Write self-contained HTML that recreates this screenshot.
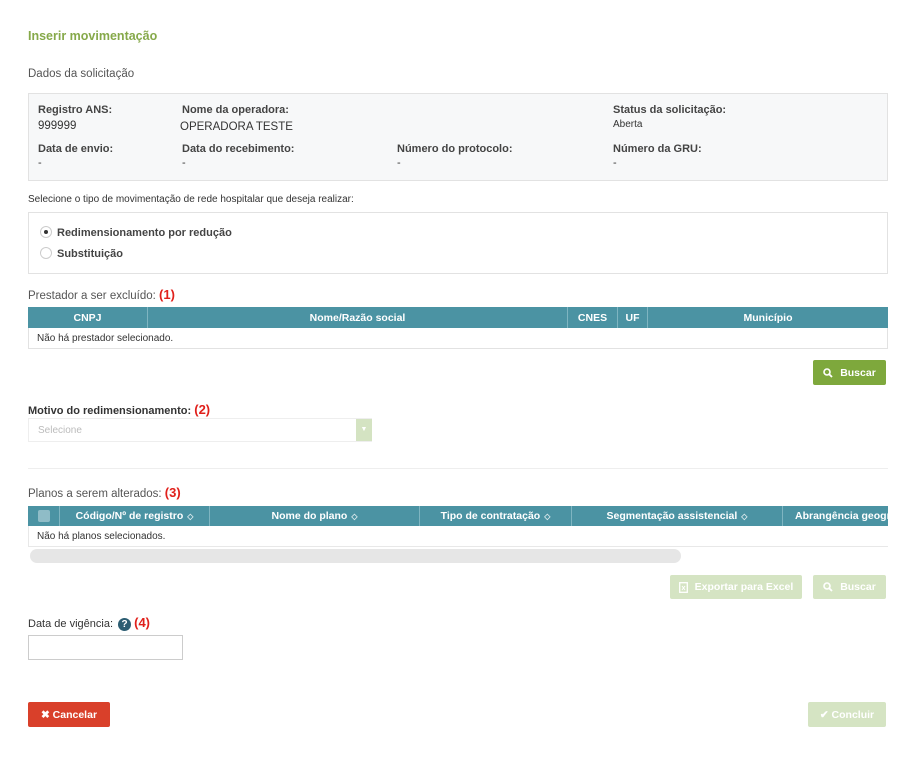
<!DOCTYPE html>
<html><head><meta charset="utf-8"><style>
*{box-sizing:border-box;margin:0;padding:0}
body{width:911px;height:776px;background:#fff;font-family:"Liberation Sans",sans-serif;color:#333;position:relative;overflow:hidden;font-size:11px}
.a{position:absolute;white-space:nowrap}
.b{font-weight:bold}
.red{color:#e0201b;font-weight:bold;font-size:13px}
.th{position:absolute;background:#4b93a3;color:#fff;font-weight:bold;font-size:10.5px;display:flex}
.th div{border-right:1px solid #7fb5c1;display:flex;align-items:center;justify-content:center;height:100%}
.btn{position:absolute;border-radius:2px;color:#fff;font-weight:bold;font-size:10.5px;display:flex;align-items:center;justify-content:center;gap:7px}
.sort{font-size:8px;opacity:.8;margin-left:4px}
</style></head><body>
<div class="a b" style="left:28px;top:29px;font-size:12.5px;color:#86a94a">Inserir movimentação</div>
<div class="a" style="left:28px;top:68px;font-size:11.5px;color:#555">Dados da solicitação</div>

<div class="a" style="left:28px;top:93px;width:860px;height:88px;background:#f7f8f9;border:1px solid #e2e2e2"></div>
<div class="a b" style="left:38px;top:104px;color:#444">Registro ANS:</div>
<div class="a" style="left:38px;top:120px;font-size:11.5px">999999</div>
<div class="a b" style="left:182px;top:104px;color:#444">Nome da operadora:</div>
<div class="a" style="left:180px;top:121px;font-size:11.5px">OPERADORA TESTE</div>
<div class="a b" style="left:613px;top:104px;color:#444">Status da solicitação:</div>
<div class="a" style="left:613px;top:119px;font-size:10px">Aberta</div>
<div class="a b" style="left:38px;top:143px;color:#444">Data de envio:</div>
<div class="a b" style="left:182px;top:143px;color:#444">Data do recebimento:</div>
<div class="a b" style="left:397px;top:143px;color:#444">Número do protocolo:</div>
<div class="a b" style="left:613px;top:143px;color:#444">Número da GRU:</div>
<div class="a" style="left:38px;top:157px">-</div>
<div class="a" style="left:182px;top:157px">-</div>
<div class="a" style="left:397px;top:157px">-</div>
<div class="a" style="left:613px;top:157px">-</div>

<div class="a" style="left:28px;top:194px;font-size:10px">Selecione o tipo de movimentação de rede hospitalar que deseja realizar:</div>
<div class="a" style="left:28px;top:212px;width:860px;height:62px;border:1px solid #e2e2e2"></div>
<div class="a" style="left:40px;top:226px;width:12px;height:12px;border:1px solid #ccc;border-radius:50%;background:#fff"><div style="margin:3px;width:4px;height:4px;border-radius:50%;background:#333"></div></div>
<div class="a b" style="left:57px;top:227px;color:#444">Redimensionamento por redução</div>
<div class="a" style="left:40px;top:247px;width:12px;height:12px;border:1px solid #ccc;border-radius:50%;background:#fff"></div>
<div class="a b" style="left:57px;top:248px;color:#444">Substituição</div>

<div class="a" style="left:28px;top:287px;font-size:11.5px;color:#555">Prestador a ser excluído: <span class="red">(1)</span></div>
<div class="th" style="left:28px;top:307px;width:860px;height:21px">
<div style="width:120px">CNPJ</div><div style="width:420px">Nome/Razão social</div><div style="width:50px">CNES</div><div style="width:30px">UF</div><div style="width:240px;border:0">Município</div></div>
<div class="a" style="left:28px;top:328px;width:860px;height:21px;border:1px solid #e2e2e2;border-top:0;padding:5px 0 0 8px;font-size:10px">Não há prestador selecionado.</div>
<div class="btn" style="left:813px;top:360px;width:73px;height:25px;background:#7ea83c"><svg width="10" height="10" viewBox="0 0 10 10"><circle cx="4" cy="4" r="3" fill="none" stroke="#fff" stroke-width="1.6"/><path d="M6.2 6.2 9 9" stroke="#fff" stroke-width="1.8"/></svg>Buscar</div>

<div class="a b" style="left:28px;top:402px;color:#333">Motivo do redimensionamento: <span class="red">(2)</span></div>
<div class="a" style="left:28px;top:418px;width:344px;height:24px;border:1px solid #eee;padding:6px 0 0 9px;color:#bbb;font-size:10px">Selecione</div>
<div class="a" style="left:356px;top:419px;width:16px;height:22px;background:#d4e3c2;color:#fff;font-size:7px;text-align:center;padding-top:7px">▼</div>
<div class="a" style="left:28px;top:468px;width:860px;height:1px;background:#eee"></div>

<div class="a" style="left:28px;top:485px;font-size:11.5px;color:#555">Planos a serem alterados: <span class="red">(3)</span></div>
<div class="th" style="left:28px;top:506px;width:860px;height:20px;overflow:hidden">
<div style="width:32px;flex:none"><span style="width:12px;height:12px;background:#8fbcc7;border-radius:2px"></span></div>
<div style="width:150px;flex:none">Código/Nº de registro<span class="sort">◇</span></div>
<div style="width:210px;flex:none">Nome do plano<span class="sort">◇</span></div>
<div style="width:152px;flex:none">Tipo de contratação<span class="sort">◇</span></div>
<div style="width:211px;flex:none">Segmentação assistencial<span class="sort">◇</span></div>
<div style="width:150px;flex:none;justify-content:flex-start;padding-left:12px;border:0">Abrangência geográfica</div></div>
<div class="a" style="left:28px;top:526px;width:860px;height:21px;border:1px solid #e8e8e8;border-top:0;border-right:0;padding:5px 0 0 8px;font-size:10px">Não há planos selecionados.</div>
<div class="a" style="left:30px;top:549px;width:651px;height:14px;background:#e6e6e6;border-radius:7px"></div>

<div class="btn" style="left:670px;top:575px;width:132px;height:24px;background:#d5e4c3"><svg width="9" height="11" viewBox="0 0 9 11"><rect x=".7" y=".7" width="7.6" height="9.6" fill="none" stroke="#fff" stroke-width="1.3"/><path d="M3 4l3 4M6 4l-3 4" stroke="#fff"/></svg>Exportar para Excel</div>
<div class="btn" style="left:813px;top:575px;width:73px;height:24px;background:#d5e4c3"><svg width="10" height="10" viewBox="0 0 10 10"><circle cx="4" cy="4" r="3" fill="none" stroke="#fff" stroke-width="1.6"/><path d="M6.2 6.2 9 9" stroke="#fff" stroke-width="1.8"/></svg>Buscar</div>

<div class="a" style="left:28px;top:615px;font-size:11px">Data de vigência: <span style="display:inline-block;width:13px;height:13px;border-radius:50%;background:#2c5d72;color:#fff;font-size:10px;font-weight:bold;text-align:center;line-height:13px;vertical-align:0px;margin-left:2px">?</span> <span class="red">(4)</span></div>
<div class="a" style="left:28px;top:635px;width:155px;height:25px;border:1px solid #ccc"></div>

<div class="btn" style="left:28px;top:702px;width:82px;height:25px;background:#d9402a">✖ Cancelar</div>
<div class="btn" style="left:808px;top:702px;width:78px;height:25px;background:#d5e4c3">✔ Concluir</div>
</body></html>
